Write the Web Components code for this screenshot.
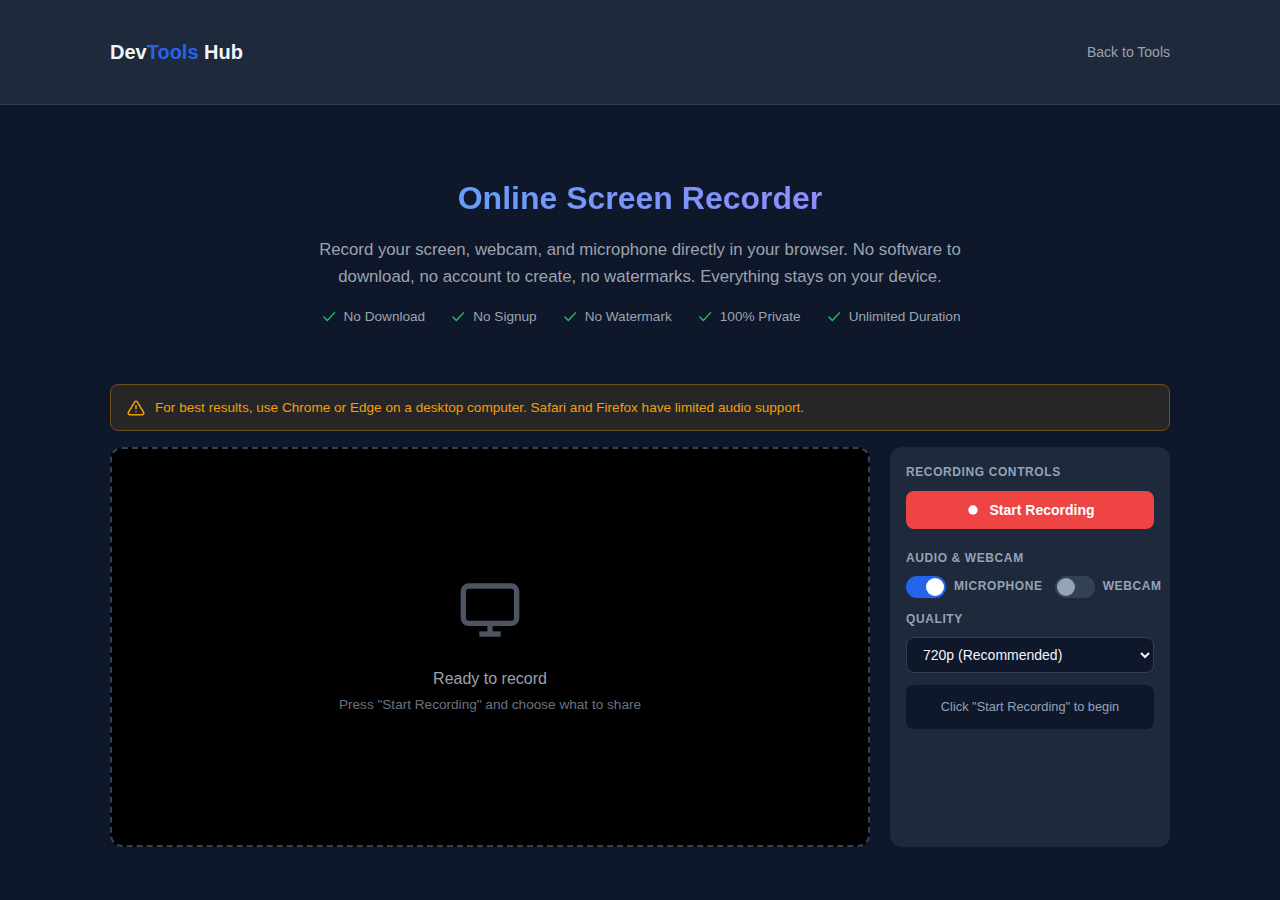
<!DOCTYPE html>
<html lang="en">
<head>
<meta charset="utf-8">
<title>Online Screen Recorder</title>
<style>
body{margin:0;background:#0f172a;color:#f1f5f9;font-family:"Liberation Sans",Arial,sans-serif}
</style>
</head>
<body>
<site-header></site-header>
<hero-block></hero-block>
<recorder-app></recorder-app>

<script>
class SiteHeader extends HTMLElement{
    constructor(){
        super()
        const shadow = this.attachShadow({mode: "open"})
        shadow.innerHTML = `
        <style>
        :host{display:block;background:#1e293b;border-bottom:1px solid #334155}
        .bar{max-width:1060px;height:104px;margin:0 auto;display:flex;align-items:center;justify-content:space-between}
        .logo{font-size:20px;font-weight:700;color:#f1f5f9}
        .logo span{color:#2563eb}
        a{font-size:14px;color:#9ca3af;text-decoration:none}
        </style>
        <div class="bar">
            <div class="logo">Dev<span>Tools</span> Hub</div>
            <a href="#">Back to Tools</a>
        </div>`
    }
}
customElements.define("site-header", SiteHeader)

class FeatureTag extends HTMLElement{
    constructor(){
        super()
        const shadow = this.attachShadow({mode: "open"})
        shadow.innerHTML = `
        <style>
        :host{display:inline-flex;align-items:center;gap:8px;font-size:13.6px;color:#9ca3af}
        svg{width:16px;height:16px;fill:none;stroke:#22c55e;stroke-width:2;stroke-linecap:round;stroke-linejoin:round}
        </style>
        <svg viewBox="0 0 24 24"><path d="M5.8 13.5 11 18.8 22 7"/></svg><slot></slot>`
    }
}
customElements.define("feature-tag", FeatureTag)

class HeroBlock extends HTMLElement{
    constructor(){
        super()
        const shadow = this.attachShadow({mode: "open"})
        shadow.innerHTML = `
        <style>
        :host{display:block;padding:72px 0 60px;text-align:center}
        h1{margin:0 auto 17px;font-size:32px;line-height:42px;font-weight:700;width:max-content;
           background:linear-gradient(90deg,#689df8,#8e8efc);-webkit-background-clip:text;background-clip:text;color:transparent}
        p{margin:0 auto 18px;max-width:700px;font-size:16.8px;line-height:27px;color:#9ca3af}
        .tags{display:flex;justify-content:center;gap:24px}
        </style>
        <h1>Online Screen Recorder</h1>
        <p>Record your screen, webcam, and microphone directly in your browser. No software to<br>download, no account to create, no watermarks. Everything stays on your device.</p>
        <div class="tags">
            <feature-tag>No Download</feature-tag>
            <feature-tag>No Signup</feature-tag>
            <feature-tag>No Watermark</feature-tag>
            <feature-tag>100% Private</feature-tag>
            <feature-tag>Unlimited Duration</feature-tag>
        </div>`
    }
}
customElements.define("hero-block", HeroBlock)

class WarnBanner extends HTMLElement{
    constructor(){
        super()
        const shadow = this.attachShadow({mode: "open"})
        shadow.innerHTML = `
        <style>
        :host{display:flex;align-items:center;gap:10px;box-sizing:border-box;height:47px;padding:0 16px;
              background:#262626;border:1px solid #6b4f1d;border-radius:8px;font-size:13.6px;color:#f59e0b}
        svg{width:18px;height:18px;flex-shrink:0;fill:none;stroke:#f59e0b;stroke-width:2;stroke-linecap:round;stroke-linejoin:round}
        </style>
        <svg viewBox="0 0 24 24"><path d="M10.3 3.9 1.8 18a2 2 0 0 0 1.7 3h17a2 2 0 0 0 1.7-3L13.7 3.9a2 2 0 0 0-3.4 0z"/><path d="M12 9v4"/><path d="M12 17h.01"/></svg>
        <slot></slot>`
    }
}
customElements.define("warn-banner", WarnBanner)

class VideoStage extends HTMLElement{
    constructor(){
        super()
        const shadow = this.attachShadow({mode: "open"})
        shadow.innerHTML = `
        <style>
        :host{display:flex;flex-direction:column;align-items:center;justify-content:center;box-sizing:border-box;height:400px;
              background:#000;border:2px dashed #334155;border-radius:12px;color:#9ca3af}
        svg{width:64px;height:64px;margin-bottom:24px;fill:none;stroke:#4b5563;stroke-width:2}
        .a{font-size:16px;line-height:26px;margin-bottom:2px}
        .b{font-size:13.6px;line-height:22px;color:#6b7280}
        </style>
        <svg viewBox="0 0 24 24"><rect x="2" y="3" width="20" height="14" rx="2"/><path d="M8 21h8"/><path d="M12 17v4"/></svg>
        <div class="a">Ready to record</div>
        <div class="b">Press "Start Recording" and choose what to share</div>`
    }
}
customElements.define("video-stage", VideoStage)

class ToggleSwitch extends HTMLElement{
    constructor(){
        super()
        const shadow = this.attachShadow({mode: "open"})
        shadow.innerHTML = `
        <style>
        :host{display:inline-flex;align-items:center;gap:8px;flex-shrink:0;font-size:12px;font-weight:700;letter-spacing:.6px;color:#94a3b8;white-space:nowrap}
        .track{position:relative;width:40px;height:22px;border-radius:11px;background:#334155;flex-shrink:0}
        .knob{position:absolute;top:2px;left:2px;width:18px;height:18px;border-radius:50%;background:#94a3b8}
        .label{margin-bottom:2px}
        :host([on]) .track{background:#2563eb}
        :host([on]) .knob{left:20px;background:#fff}
        </style>
        <span class="track"><span class="knob"></span></span><span class="label"><slot></slot></span>`
    }
}
customElements.define("toggle-switch", ToggleSwitch)

class ControlPanel extends HTMLElement{
    constructor(){
        super()
        const shadow = this.attachShadow({mode: "open"})
        shadow.innerHTML = `
        <style>
        :host{display:block;box-sizing:border-box;height:400px;padding:16px;background:#1e293b;border-radius:12px}
        h3{margin:0;font-size:12px;line-height:18px;font-weight:700;letter-spacing:.6px;color:#94a3b8}
        button{display:flex;align-items:center;justify-content:center;gap:8px;width:100%;height:38px;margin:10px 0 20px;border:0;border-radius:8px;
               background:#ef4444;color:#fff;font:700 14px "Liberation Sans",Arial,sans-serif}
        button svg{width:16px;height:16px;fill:#fff}
        .row{display:flex;gap:12px;margin:9px 0 12px}
        select{display:block;width:100%;height:36px;margin:9px 0 12px;padding:0 12px;background:#0f172a;color:#f1f5f9;border:1px solid #334155;border-radius:8px;
               font:14px "Liberation Sans",Arial,sans-serif}
        .status{display:flex;align-items:center;justify-content:center;box-sizing:border-box;height:44px;padding-bottom:2px;background:#0f172a;border-radius:8px;font-size:12.8px;color:#94a3b8}
        </style>
        <h3>RECORDING CONTROLS</h3>
        <button><svg viewBox="0 0 24 24"><circle cx="12" cy="12" r="7"/></svg>Start Recording</button>
        <h3>AUDIO &amp; WEBCAM</h3>
        <div class="row">
            <toggle-switch on>MICROPHONE</toggle-switch>
            <toggle-switch>WEBCAM</toggle-switch>
        </div>
        <h3>QUALITY</h3>
        <select>
            <option>720p (Recommended)</option>
            <option>1080p</option>
            <option>480p</option>
        </select>
        <div class="status">Click "Start Recording" to begin</div>`
    }
}
customElements.define("control-panel", ControlPanel)

class RecorderApp extends HTMLElement{
    constructor(){
        super()
        const shadow = this.attachShadow({mode: "open"})
        shadow.innerHTML = `
        <style>
        :host{display:block;max-width:1060px;margin:0 auto}
        .main{display:grid;grid-template-columns:760px 280px;gap:20px;margin-top:16px}
        </style>
        <warn-banner>For best results, use Chrome or Edge on a desktop computer. Safari and Firefox have limited audio support.</warn-banner>
        <div class="main">
            <video-stage></video-stage>
            <control-panel></control-panel>
        </div>`
    }
}
customElements.define("recorder-app", RecorderApp)
</script>
</body>
</html>
